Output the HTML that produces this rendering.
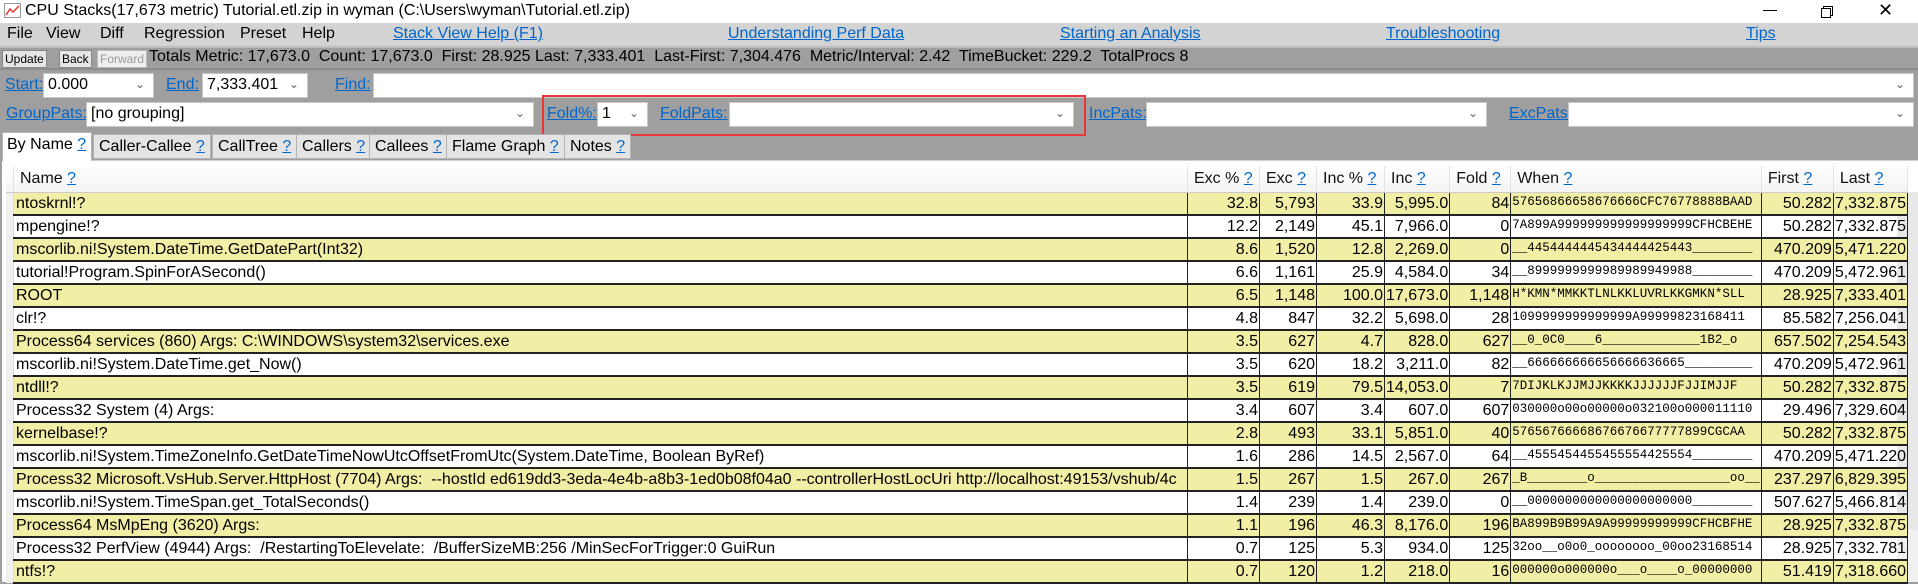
<!DOCTYPE html>
<html><head><meta charset="utf-8"><style>
*{box-sizing:border-box;margin:0;padding:0}
body{width:1918px;height:582px;overflow:hidden;background:#a09fa0;font-family:"Liberation Sans",sans-serif;font-size:15px;color:#000;position:relative}
.a{position:absolute;white-space:nowrap}
a,.l{color:#0066cc;text-decoration:underline}
.inp{position:absolute;background:#fff;border:1px solid #c8c8c8;font-size:16px;padding:2px 4px;overflow:hidden;white-space:nowrap}
.inp .dd{position:absolute;right:8px;top:3px;color:#666;font-size:12px}
.btn{position:absolute;top:50px;height:18px;background:#e6e6e6;border:1px solid #888;font-size:12px;line-height:16px;padding:0 2px}
.tab{position:absolute;top:134px;height:25px;background:#e4e4e4;border:1px solid #b4b4b4;font-size:16px;line-height:23px;padding:0 5px;white-space:nowrap}
table{position:absolute;left:6px;top:166px;border-collapse:collapse;table-layout:fixed;font-size:16px}
td{height:23px;border:1px solid #222;border-width:0 1px 2px 0;padding:0 1px;overflow:hidden;white-space:nowrap;text-align:right;line-height:21px}
td.n{text-align:left;padding-left:2px}
td.w{font-family:"Liberation Mono",monospace;font-size:12.5px;text-align:left;line-height:14px;vertical-align:top;padding:2px 1px 0}
td.r{border:0;background:#f0f0f0;border-right:1px solid #ddd}
tr.y td{background:#f1eea6}
tr.y td.r,tr.z td.r{background:#f0f0f0}
tr.h td{height:26px;background:linear-gradient(#fff,#f4f4f4);border:0;border-right:1px solid #e2e2e2;text-align:left;padding-left:6px;color:#111;font-size:16px;border-bottom:1px solid #ccc}
tr.h td span{color:#0066cc;text-decoration:underline}
</style></head><body>
<div class="a" style="left:0;top:0;width:1918px;height:23px;background:#fff"></div>
<svg class="a" style="left:4px;top:3px" width="17" height="15"><rect x="0.5" y="0.5" width="16" height="14" fill="#fff" stroke="#999"/><polyline points="2,12 6,6 9,9 15,3" fill="none" stroke="#d33" stroke-width="1.5"/></svg>
<div class="a" style="left:25px;top:2px;font-size:16px">CPU Stacks(17,673 metric) Tutorial.etl.zip in wyman (C:\Users\wyman\Tutorial.etl.zip)</div>
<div class="a" style="left:1763px;top:10px;width:14px;height:1px;background:#000"></div>
<div class="a" style="left:1823px;top:6px;width:10px;height:10px;border:1px solid #000;background:#fff"></div>
<div class="a" style="left:1821px;top:8px;width:10px;height:10px;border:1px solid #000;background:#fff"></div>
<div class="a" style="left:1878px;top:0px;font-size:18px">✕</div>
<div class="a" style="left:0;top:23px;width:1918px;height:23px;background:#d3d3d3"></div>
<div class="a" style="left:7px;top:25px;font-size:16px">File</div>
<div class="a" style="left:46px;top:25px;font-size:16px">View</div>
<div class="a" style="left:100px;top:25px;font-size:16px">Diff</div>
<div class="a" style="left:144px;top:25px;font-size:16px">Regression</div>
<div class="a" style="left:240px;top:25px;font-size:16px">Preset</div>
<div class="a" style="left:302px;top:25px;font-size:16px">Help</div>
<div class="a l" style="left:393px;top:25px;font-size:16px">Stack View Help (F1)</div>
<div class="a l" style="left:728px;top:25px;font-size:16px">Understanding Perf Data</div>
<div class="a l" style="left:1060px;top:25px;font-size:16px">Starting an Analysis</div>
<div class="a l" style="left:1386px;top:25px;font-size:16px">Troubleshooting</div>
<div class="a l" style="left:1746px;top:25px;font-size:16px">Tips</div>
<div class="a" style="left:0;top:46px;width:1918px;height:24px;background:#a09fa0;border-top:2px solid #bdbdbd;border-bottom:2px solid #8d8d8d"></div>
<div class="btn" style="left:2px">Update</div>
<div class="btn" style="left:59px">Back</div>
<div class="btn" style="left:97px;color:#999;border-color:#bbb;background:#eee">Forward</div>
<div class="a" style="left:149px;top:48px;font-size:16px">Totals Metric: 17,673.0&nbsp; Count: 17,673.0&nbsp; First: 28.925 Last: 7,333.401&nbsp; Last-First: 7,304.476&nbsp; Metric/Interval: 2.42&nbsp; TimeBucket: 229.2&nbsp; TotalProcs 8</div>
<div class="a l" style="left:5px;top:76px;font-size:16px">Start:</div>
<div class="inp" style="left:43px;top:73px;width:111px;height:25px">0.000<span class="dd">⌄</span></div>
<div class="a l" style="left:166px;top:76px;font-size:16px">End:</div>
<div class="inp" style="left:202px;top:73px;width:106px;height:25px">7,333.401<span class="dd">⌄</span></div>
<div class="a l" style="left:335px;top:76px;font-size:16px">Find:</div>
<div class="inp" style="left:373px;top:73px;width:1541px;height:25px"><span class="dd">⌄</span></div>
<div class="a l" style="left:6px;top:105px;font-size:16px">GroupPats:</div>
<div class="inp" style="left:86px;top:102px;width:448px;height:25px">[no grouping]<span class="dd">⌄</span></div>
<div class="a" style="left:542px;top:95px;width:544px;height:41px;border:2px solid #e8363a"></div>
<div class="a l" style="left:547px;top:105px;font-size:16px">Fold%:</div>
<div class="inp" style="left:597px;top:102px;width:51px;height:25px">1<span class="dd">⌄</span></div>
<div class="a l" style="left:660px;top:105px;font-size:16px">FoldPats:</div>
<div class="inp" style="left:729px;top:102px;width:345px;height:25px"><span class="dd">⌄</span></div>
<div class="a l" style="left:1089px;top:105px;font-size:16px">IncPats:</div>
<div class="inp" style="left:1146px;top:102px;width:341px;height:25px"><span class="dd">⌄</span></div>
<div class="a l" style="left:1509px;top:105px;font-size:16px">ExcPats:</div>
<div class="inp" style="left:1568px;top:102px;width:346px;height:25px"><span class="dd">⌄</span></div>
<div class="tab" style="left:93px">Caller-Callee <a>?</a></div>
<div class="tab" style="left:212px">CallTree <a>?</a></div>
<div class="tab" style="left:296px">Callers <a>?</a></div>
<div class="tab" style="left:369px">Callees <a>?</a></div>
<div class="tab" style="left:446px">Flame Graph <a>?</a></div>
<div class="tab" style="left:564px">Notes <a>?</a></div>
<div class="a" style="left:2px;top:160px;width:1916px;height:422px;background:#fff;border-top:1px solid #d0d0d0"></div>
<div class="tab" style="left:2px;top:132px;height:29px;background:#fff;border-bottom:0;width:90px;padding:0 4px">By Name <a>?</a></div>
<div class="a" style="left:1897px;top:192px;width:21px;height:390px;background:#e8e8e8"></div>
<div class="a" style="left:1902px;top:194px;color:#888;font-size:13px">^</div>
<div class="a" style="left:1897px;top:530px;width:21px;height:52px;background:#f0f0f0"></div>
<table>
<colgroup><col style="width:6px"><col style="width:1174px"><col style="width:72px"><col style="width:57px"><col style="width:68px"><col style="width:63px"><col style="width:61px"><col style="width:243px"><col style="width:72px"><col style="width:74px"></colgroup>
<tr class="h"><td class="r"></td><td>Name <span>?</span></td><td>Exc % <span>?</span></td><td>Exc <span>?</span></td><td>Inc % <span>?</span></td><td>Inc <span>?</span></td><td>Fold <span>?</span></td><td>When <span>?</span></td><td>First <span>?</span></td><td>Last <span>?</span></td></tr>
<tr class="y"><td class="r"></td><td class="n">ntoskrnl!?</td><td>32.8</td><td>5,793</td><td>33.9</td><td>5,995.0</td><td>84</td><td class="w">57656866658676666CFC76778888BAAD</td><td>50.282</td><td>7,332.875</td></tr>
<tr class="z"><td class="r"></td><td class="n">mpengine!?</td><td>12.2</td><td>2,149</td><td>45.1</td><td>7,966.0</td><td>0</td><td class="w">7A899A999999999999999999CFHCBEHE</td><td>50.282</td><td>7,332.875</td></tr>
<tr class="y"><td class="r"></td><td class="n">mscorlib.ni!System.DateTime.GetDatePart(Int32)</td><td>8.6</td><td>1,520</td><td>12.8</td><td>2,269.0</td><td>0</td><td class="w">__4454444445434444425443________</td><td>470.209</td><td>5,471.220</td></tr>
<tr class="z"><td class="r"></td><td class="n">tutorial!Program.SpinForASecond()</td><td>6.6</td><td>1,161</td><td>25.9</td><td>4,584.0</td><td>34</td><td class="w">__8999999999989989949988________</td><td>470.209</td><td>5,472.961</td></tr>
<tr class="y"><td class="r"></td><td class="n">ROOT</td><td>6.5</td><td>1,148</td><td>100.0</td><td>17,673.0</td><td>1,148</td><td class="w">H*KMN*MMKKTLNLKKLUVRLKKGMKN*SLL</td><td>28.925</td><td>7,333.401</td></tr>
<tr class="z"><td class="r"></td><td class="n">clr!?</td><td>4.8</td><td>847</td><td>32.2</td><td>5,698.0</td><td>28</td><td class="w">1099999999999999A99999823168411</td><td>85.582</td><td>7,256.041</td></tr>
<tr class="y"><td class="r"></td><td class="n">Process64 services (860) Args: C:\WINDOWS\system32\services.exe</td><td>3.5</td><td>627</td><td>4.7</td><td>828.0</td><td>627</td><td class="w">__0_0C0____6_____________1B2_o</td><td>657.502</td><td>7,254.543</td></tr>
<tr class="z"><td class="r"></td><td class="n">mscorlib.ni!System.DateTime.get_Now()</td><td>3.5</td><td>620</td><td>18.2</td><td>3,211.0</td><td>82</td><td class="w">__666666666656666636665_________</td><td>470.209</td><td>5,472.961</td></tr>
<tr class="y"><td class="r"></td><td class="n">ntdll!?</td><td>3.5</td><td>619</td><td>79.5</td><td>14,053.0</td><td>7</td><td class="w">7DIJKLKJJMJJKKKKJJJJJJFJJIMJJF</td><td>50.282</td><td>7,332.875</td></tr>
<tr class="z"><td class="r"></td><td class="n">Process32 System (4) Args:</td><td>3.4</td><td>607</td><td>3.4</td><td>607.0</td><td>607</td><td class="w">030000o00o00000o032100o000011110</td><td>29.496</td><td>7,329.604</td></tr>
<tr class="y"><td class="r"></td><td class="n">kernelbase!?</td><td>2.8</td><td>493</td><td>33.1</td><td>5,851.0</td><td>40</td><td class="w">57656766668676676677777899CGCAA</td><td>50.282</td><td>7,332.875</td></tr>
<tr class="z"><td class="r"></td><td class="n">mscorlib.ni!System.TimeZoneInfo.GetDateTimeNowUtcOffsetFromUtc(System.DateTime, Boolean ByRef)</td><td>1.6</td><td>286</td><td>14.5</td><td>2,567.0</td><td>64</td><td class="w">__4555454455455554425554________</td><td>470.209</td><td>5,471.220</td></tr>
<tr class="y"><td class="r"></td><td class="n">Process32 Microsoft.VsHub.Server.HttpHost (7704) Args:&nbsp; --hostId ed619dd3-3eda-4e4b-a8b3-1ed0b08f04a0 --controllerHostLocUri http://localhost:49153/vshub/4c</td><td>1.5</td><td>267</td><td>1.5</td><td>267.0</td><td>267</td><td class="w">_B________o__________________oo__</td><td>237.297</td><td>6,829.395</td></tr>
<tr class="z"><td class="r"></td><td class="n">mscorlib.ni!System.TimeSpan.get_TotalSeconds()</td><td>1.4</td><td>239</td><td>1.4</td><td>239.0</td><td>0</td><td class="w">__0000000000000000000000________</td><td>507.627</td><td>5,466.814</td></tr>
<tr class="y"><td class="r"></td><td class="n">Process64 MsMpEng (3620) Args:</td><td>1.1</td><td>196</td><td>46.3</td><td>8,176.0</td><td>196</td><td class="w">BA899B9B99A9A99999999999CFHCBFHE</td><td>28.925</td><td>7,332.875</td></tr>
<tr class="z"><td class="r"></td><td class="n">Process32 PerfView (4944) Args:&nbsp; /RestartingToElevelate:&nbsp; /BufferSizeMB:256 /MinSecForTrigger:0 GuiRun</td><td>0.7</td><td>125</td><td>5.3</td><td>934.0</td><td>125</td><td class="w">32oo__o0o0_oooooooo_00oo23168514</td><td>28.925</td><td>7,332.781</td></tr>
<tr class="y"><td class="r"></td><td class="n">ntfs!?</td><td>0.7</td><td>120</td><td>1.2</td><td>218.0</td><td>16</td><td class="w">000000o000000o___o____o_00000000</td><td>51.419</td><td>7,318.660</td></tr>
</table>
</body></html>
